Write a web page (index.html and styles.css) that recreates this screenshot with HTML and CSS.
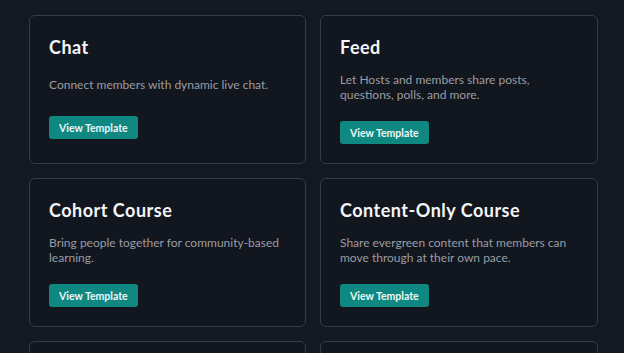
FILE: index.html
```html
<!DOCTYPE html>
<html lang="en">
<head>
<meta charset="utf-8">
<title>Templates</title>
<link rel="stylesheet" href="styles.css">
</head>
<body>
<main class="grid">
  <section class="card">
    <h2 class="title">Chat</h2>
    <p class="desc">Connect members with dynamic live chat.</p>
    <a class="btn" href="#">View Template</a>
  </section>
  <section class="card">
    <h2 class="title">Feed</h2>
    <p class="desc">Let Hosts and members share posts, questions, polls, and more.</p>
    <a class="btn" href="#">View Template</a>
  </section>
  <section class="card">
    <h2 class="title">Cohort Course</h2>
    <p class="desc">Bring people together for community-based learning.</p>
    <a class="btn" href="#">View Template</a>
  </section>
  <section class="card">
    <h2 class="title">Content-Only Course</h2>
    <p class="desc">Share evergreen content that members can move through at their own pace.</p>
    <a class="btn" href="#">View Template</a>
  </section>
  <section class="card"></section>
  <section class="card"></section>
</main>
</body>
</html>
```
FILE: styles.css
```css
html, body {
  margin: 0;
  height: 100%;
  overflow: hidden;
}
body {
  background: #131821;
  font-family: Lato, "Noto Sans", sans-serif;
  padding: 15px 27px 0 29px;
  box-sizing: border-box;
}
.grid {
  display: grid;
  grid-template-columns: 277px 278px;
  grid-auto-rows: 149px;
  column-gap: 14px;
  row-gap: 14px;
}
.card {
  box-sizing: border-box;
  border: 1px solid #363b44;
  border-radius: 6px;
  background: #12161e;
  padding: 19px 19px 0 19px;
  display: flex;
  flex-direction: column;
  align-items: flex-start;
}
.title {
  margin: 0;
  font-size: 18px;
  line-height: 24px;
  font-weight: 700;
  letter-spacing: 0.5px;
  color: #f4f5f6;
}
.desc {
  margin: 12.5px 0 0 0;
  min-height: 25px;
  display: flex;
  align-items: center;
  font-size: 12px;
  line-height: 15px;
  color: #9a9da3;
  max-width: 234px;
}
.btn {
  margin-top: 19.5px;
  height: 23px;
  padding: 0 10px;
  display: inline-flex;
  align-items: center;
  background: #0f8881;
  color: #eef7f6;
  border-radius: 3px;
  font-size: 10.5px;
  font-weight: 700;
  text-decoration: none;
}
```
